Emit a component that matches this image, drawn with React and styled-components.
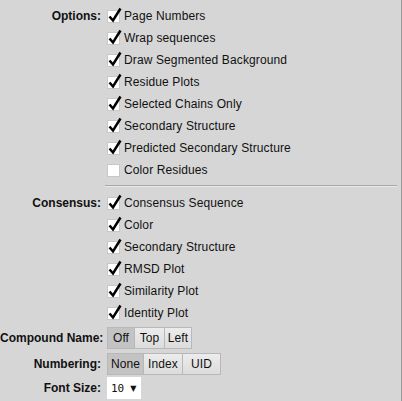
import React from "react";
import styled, { createGlobalStyle } from "styled-components";

const Global = createGlobalStyle`
  html, body { margin: 0; padding: 0; background: #d6d6d6; }
  body { font-family: "Liberation Sans", Arial, sans-serif; font-size: 12px; color: #111; letter-spacing: 0.12px; }
`;

const Panel = styled.div`
  width: 402px;
  height: 401px;
  box-sizing: border-box;
  border-right: 1px solid #9a9a9a;
  background: #d6d6d6;
  padding-top: 5px;
  display: flex;
  flex-direction: column;
`;

const Row = styled.div`
  display: flex;
  align-items: center;
  height: ${(p) => p.$h || 22}px;
  margin-top: ${(p) => p.$mt || 0}px;
`;

const Label = styled.div`
  width: 101px;
  text-align: right;
  font-weight: bold;
  white-space: nowrap;
  padding-right: 5px;
  flex: none;
  letter-spacing: 0;
`;

const Check = styled.label`
  display: flex;
  align-items: center;
  gap: 4px;
  white-space: nowrap;
`;

const Box = styled.span`
  position: relative;
  width: 11px;
  height: 11px;
  background: #fff;
  border: 1px solid #c8c8c8;
  flex: none;
  margin-left: 1px;
`;

const Tick = styled.svg`
  position: absolute;
  left: 0px;
  top: -4px;
`;

const Sep = styled.div`
  margin: 4px 4px 5px 105px;
  height: 1px;
  background: #a8a8a8;
  border-bottom: 1px solid #e8e8e8;
`;

const Group = styled.div`
  display: flex;
  margin-left: 1px;
`;

const Btn = styled.div`
  width: ${(p) => p.$w}px;
  box-sizing: border-box;
  height: 22px;
  line-height: 20px;
  text-align: center;
  border: 1px solid #b8b8b8;
  margin-left: -1px;
  background: ${(p) => (p.$on ? "#c3c3c3" : "linear-gradient(#ececec, #dcdcdc)")};
  color: #111;
  &:first-child { margin-left: 0; }
`;

const Select = styled.div`
  margin-left: 1px;
  width: 34px;
  height: 22px;
  box-sizing: border-box;
  background: #fff;
  display: flex;
  align-items: center;
  padding-left: 4px;
  font-family: "DejaVu Sans Mono", "Liberation Mono", monospace;
  font-size: 11px;
  gap: 6px;
  letter-spacing: 0;
`;

const Arrow = styled.span`
  font-family: "DejaVu Sans", sans-serif;
  font-size: 8px;
`;

function CheckItem({ label, checked = true }) {
  return (
    <Check>
      <Box>
        {checked && (
          <Tick width="14" height="16" viewBox="0 0 14 16">
            <path d="M1.5 9.5 L5 13.5 L12.5 1.5" fill="none" stroke="#000" strokeWidth="2.5" strokeLinejoin="miter" />
          </Tick>
        )}
      </Box>
      <span>{label}</span>
    </Check>
  );
}

const options = [
  ["Page Numbers", true],
  ["Wrap sequences", true],
  ["Draw Segmented Background", true],
  ["Residue Plots", true],
  ["Selected Chains Only", true],
  ["Secondary Structure", true],
  ["Predicted Secondary Structure", true],
  ["Color Residues", false],
];

const consensus = [
  "Consensus Sequence",
  "Color",
  "Secondary Structure",
  "RMSD Plot",
  "Similarity Plot",
  "Identity Plot",
];

export default function App() {
  return (
    <>
      <Global />
      <Panel>
        {options.map(([l, c], i) => (
          <Row key={l}>
            <Label>{i === 0 ? "Options:" : ""}</Label>
            <CheckItem label={l} checked={c} />
          </Row>
        ))}
        <Sep />
        {consensus.map((l, i) => (
          <Row key={l}>
            <Label>{i === 0 ? "Consensus:" : ""}</Label>
            <CheckItem label={l} />
          </Row>
        ))}
        <Row $h={22} $mt={3}>
          <Label>Compound Name:</Label>
          <Group>
            <Btn $on $w={28}>Off</Btn>
            <Btn $w={31}>Top</Btn>
            <Btn $w={28}>Left</Btn>
          </Group>
        </Row>
        <Row $h={22} $mt={4}>
          <Label>Numbering:</Label>
          <Group>
            <Btn $on $w={37}>None</Btn>
            <Btn $w={40}>Index</Btn>
            <Btn $w={39}>UID</Btn>
          </Group>
        </Row>
        <Row $h={22} $mt={2}>
          <Label>Font Size:</Label>
          <Select>
            <span>10</span>
            <Arrow>▼</Arrow>
          </Select>
        </Row>
      </Panel>
    </>
  );
}
